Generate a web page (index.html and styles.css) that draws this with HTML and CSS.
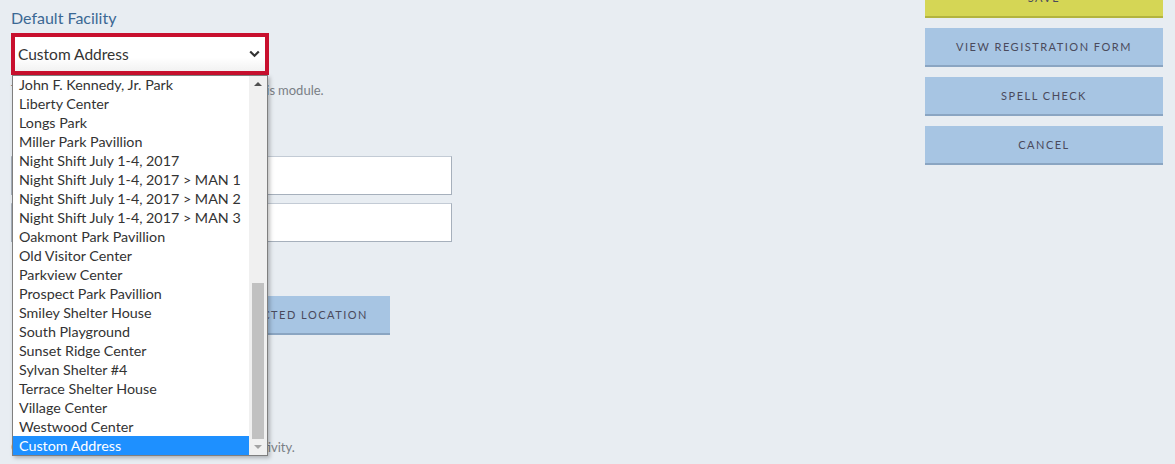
FILE: index.html
```html
<!DOCTYPE html>
<html lang="en">
<head>
<meta charset="utf-8">
<title>Default Facility</title>
<link rel="stylesheet" href="styles.css">
</head>
<body>
<div class="page">
  <main class="main">
    <div class="field-label">Default Facility</div>
    <div class="select-wrap">
      <div class="select">
        <span class="select-value">Custom Address</span>
        <svg class="chevron" width="11" height="8" viewBox="0 0 11 8"><path d="M1.2 1.5 L5.5 5.8 L9.8 1.5" fill="none" stroke="#333" stroke-width="2.2"/></svg>
      </div>
      <div class="dropdown">
        <ul class="options">
          <li>John F. Kennedy, Jr. Park</li>
          <li>Liberty Center</li>
          <li>Longs Park</li>
          <li>Miller Park Pavillion</li>
          <li>Night Shift July 1-4, 2017</li>
          <li>Night Shift July 1-4, 2017 &gt; MAN 1</li>
          <li>Night Shift July 1-4, 2017 &gt; MAN 2</li>
          <li>Night Shift July 1-4, 2017 &gt; MAN 3</li>
          <li>Oakmont Park Pavillion</li>
          <li>Old Visitor Center</li>
          <li>Parkview Center</li>
          <li>Prospect Park Pavillion</li>
          <li>Smiley Shelter House</li>
          <li>South Playground</li>
          <li>Sunset Ridge Center</li>
          <li>Sylvan Shelter #4</li>
          <li>Terrace Shelter House</li>
          <li>Village Center</li>
          <li>Westwood Center</li>
          <li class="selected">Custom Address</li>
        </ul>
        <div class="scrollbar">
          <div class="arrow up"></div>
          <div class="track"><div class="thumb"></div></div>
          <div class="arrow down"></div>
        </div>
      </div>
    </div>
    <p class="help top">The default facility will be used for items in this module.</p>
    <div class="inputs">
      <div class="input"></div>
      <div class="input"></div>
    </div>
    <div class="btn-row">
      <button class="btn btn-blue">Use Selected Location</button>
    </div>
    <p class="help bottom">Choose a default location to use with this activity.</p>
  </main>
  <aside class="sidebar">
    <button class="btn btn-save">Save</button>
    <button class="btn btn-blue">View Registration Form</button>
    <button class="btn btn-blue">Spell Check</button>
    <button class="btn btn-blue">Cancel</button>
  </aside>
</div>
</body>
</html>
```

FILE: styles.css
```css
* { box-sizing: border-box; }
html, body { margin: 0; padding: 0; }
body {
  background: #e8edf2;
  font-family: Lato, "Open Sans", Arial, sans-serif;
  color: #333;
  height: 464px;
  overflow: hidden;
}
.page {
  display: flex;
  padding: 0 12px 0 11px;
  justify-content: space-between;
}
.main {
  width: 441px;
  padding-top: 8px;
}
.field-label {
  font-size: 16px;
  line-height: 20px;
  color: #3b6894;
}
.select-wrap {
  position: relative;
  margin-top: 5px;
  width: 258px;
}
.select {
  height: 42px;
  border: 4px solid #c8102e;
  background: linear-gradient(#fff 60%, #f2f2f2);
  display: flex;
  align-items: center;
  justify-content: space-between;
  padding: 0 5px 1px 3px;
  font-size: 15.5px;
  color: #333;
}
.chevron { display: block; }
.dropdown {
  position: absolute;
  top: 42px;
  left: 1px;
  width: 256px;
  height: 381px;
  border: 1px solid #7f7f7f;
  background: #fff;
  display: flex;
  box-shadow: 2px 2px 4px rgba(0,0,0,0.25);
  z-index: 5;
  overflow: hidden;
}
.options {
  list-style: none;
  margin: -1px 0 0;
  padding: 0;
  flex: 1;
  font-size: 14.3px;
}
.options li {
  height: 19px;
  line-height: 19px;
  padding-left: 6px;
  white-space: nowrap;
  color: #333;
}
.options li.selected {
  background: #1e90ff;
  color: #fff;
}
.scrollbar {
  width: 18px;
  background: #f0f0f0;
  display: flex;
  flex-direction: column;
  align-items: center;
}
.arrow {
  width: 0; height: 0;
  margin: 6px 0;
  border-left: 4px solid transparent;
  border-right: 4px solid transparent;
}
.arrow.up { border-bottom: 4px solid #505050; }
.arrow.down { border-top: 4px solid #a3a3a3; }
.track {
  flex: 1;
  width: 100%;
  display: flex;
  flex-direction: column;
  justify-content: flex-end;
  align-items: center;
}
.thumb {
  width: 12px;
  height: 156px;
  background: #c1c1c1;
}
.help {
  margin: 6px 0 0;
  font-size: 13px;
  line-height: 18px;
  color: #7a7f86;
  white-space: nowrap;
}
.help.top { word-spacing: -0.4px; }
.inputs {
  margin-top: 57px;
  display: flex;
  flex-direction: column;
  gap: 8px;
}
.input {
  height: 39px;
  background: #fff;
  border: 1px solid #a6b0bc;
  border-top-color: #c3cbd5;
}
.btn {
  font-family: Lato, "Open Sans", Arial, sans-serif;
  font-size: 11px;
  letter-spacing: 1.5px;
  text-transform: uppercase;
  color: #4a4a5c;
  border: 0;
  height: 39px;
  padding: 0 22px;
  cursor: pointer;
}
.btn-blue {
  background: #a7c5e3;
  border-bottom: 2px solid #8aa5c2;
}
.btn-save {
  background: #d5d655;
  border-bottom: 2px solid #b3b43f;
}
.btn-row {
  margin-top: 54px;
  display: flex;
  justify-content: flex-end;
  padding-right: 62px;
}
.help.bottom { margin-top: 103px; }
.sidebar {
  width: 238px;
  margin-top: -21px;
  display: flex;
  flex-direction: column;
  gap: 10px;
}
.sidebar .btn { width: 100%; }
```
